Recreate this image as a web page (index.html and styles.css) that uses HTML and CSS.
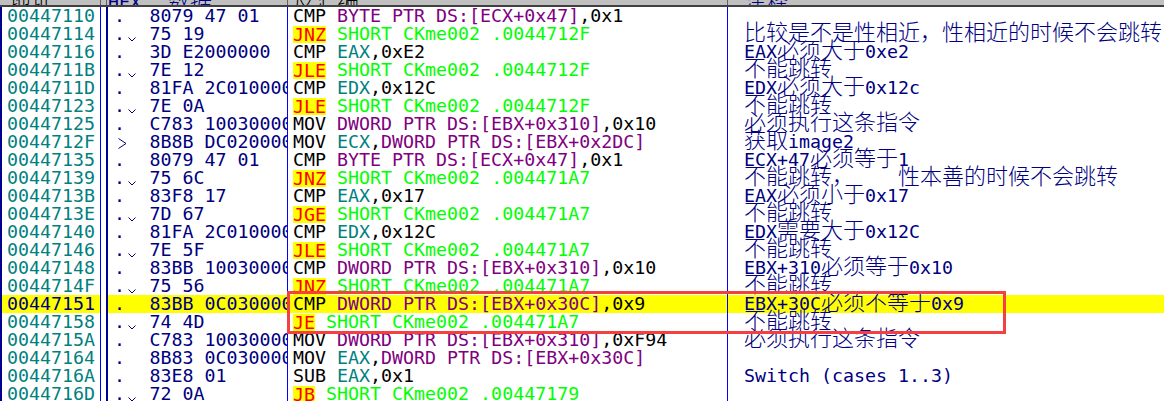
FILE: index.html
```html
<!DOCTYPE html>
<html lang="zh">
<head>
<meta charset="utf-8">
<title>CPU</title>
<link rel="stylesheet" href="styles.css">
</head>
<body>
<div class="pane">
  <div class="head">
    <div class="c-addr"><span class="hd">地址</span></div>
    <div class="c-hex"><span class="hd"><span class="lat">HEX</span> <span class="hz">数据</span></span></div>
    <div class="c-dis"><span class="hd">反汇编</span></div>
    <div class="c-com"><span class="hd">注释</span></div>
  </div>
  <div class="rows">
    <div class="row"><div class="c-addr">00447110</div><div class="c-hex"><span class="mk">.</span><span class="jm"></span><span class="by">8079 47 01</span></div><div class="c-dis">CMP <i class="m">BYTE PTR DS:[ECX+0x47]</i>,0x1</div><div class="c-com"></div></div>
    <div class="row"><div class="c-addr">00447114</div><div class="c-hex"><span class="mk">.</span><span class="jm"><svg class="ic" viewBox="0 0 8 5"><path d="M0.5 0.5L4 4L7.5 0.5"/></svg></span><span class="by">75 19</span></div><div class="c-dis"><b class="j">JNZ</b> <i class="s">SHORT CKme002 .0044712F</i></div><div class="c-com"><u>比较是不是性相近，性相近的时候不会跳转</u></div></div>
    <div class="row"><div class="c-addr">00447116</div><div class="c-hex"><span class="mk">.</span><span class="jm"></span><span class="by">3D E2000000</span></div><div class="c-dis">CMP <i class="r">EAX</i>,0xE2</div><div class="c-com">EAX<u>必须大于</u>0xe2</div></div>
    <div class="row"><div class="c-addr">0044711B</div><div class="c-hex"><span class="mk">.</span><span class="jm"><svg class="ic" viewBox="0 0 8 5"><path d="M0.5 0.5L4 4L7.5 0.5"/></svg></span><span class="by">7E 12</span></div><div class="c-dis"><b class="j">JLE</b> <i class="s">SHORT CKme002 .0044712F</i></div><div class="c-com"><u>不能跳转</u></div></div>
    <div class="row"><div class="c-addr">0044711D</div><div class="c-hex"><span class="mk">.</span><span class="jm"></span><span class="by">81FA 2C010000</span></div><div class="c-dis">CMP <i class="r">EDX</i>,0x12C</div><div class="c-com">EDX<u>必须大于</u>0x12c</div></div>
    <div class="row"><div class="c-addr">00447123</div><div class="c-hex"><span class="mk">.</span><span class="jm"><svg class="ic" viewBox="0 0 8 5"><path d="M0.5 0.5L4 4L7.5 0.5"/></svg></span><span class="by">7E 0A</span></div><div class="c-dis"><b class="j">JLE</b> <i class="s">SHORT CKme002 .0044712F</i></div><div class="c-com"><u>不能跳转</u></div></div>
    <div class="row"><div class="c-addr">00447125</div><div class="c-hex"><span class="mk">.</span><span class="jm"></span><span class="by">C783 10030000</span></div><div class="c-dis">MOV <i class="m">DWORD PTR DS:[EBX+0x310]</i>,0x10</div><div class="c-com"><u>必须执行这条指令</u></div></div>
    <div class="row"><div class="c-addr">0044712F</div><div class="c-hex"><span class="mk"><svg class="gt" viewBox="0 0 9 11"><path d="M0.5 0.5L8 5.5L0.5 10.5"/></svg></span><span class="jm"></span><span class="by">8B8B DC020000</span></div><div class="c-dis">MOV <i class="r">ECX</i>,<i class="m">DWORD PTR DS:[EBX+0x2DC]</i></div><div class="c-com"><u>获取</u>image2</div></div>
    <div class="row"><div class="c-addr">00447135</div><div class="c-hex"><span class="mk">.</span><span class="jm"></span><span class="by">8079 47 01</span></div><div class="c-dis">CMP <i class="m">BYTE PTR DS:[ECX+0x47]</i>,0x1</div><div class="c-com">ECX+47<u>必须等于</u>1</div></div>
    <div class="row"><div class="c-addr">00447139</div><div class="c-hex"><span class="mk">.</span><span class="jm"><svg class="ic" viewBox="0 0 8 5"><path d="M0.5 0.5L4 4L7.5 0.5"/></svg></span><span class="by">75 6C</span></div><div class="c-dis"><b class="j">JNZ</b> <i class="s">SHORT CKme002 .004471A7</i></div><div class="c-com"><u>不能跳转，</u>    <u>性本善的时候不会跳转</u></div></div>
    <div class="row"><div class="c-addr">0044713B</div><div class="c-hex"><span class="mk">.</span><span class="jm"></span><span class="by">83F8 17</span></div><div class="c-dis">CMP <i class="r">EAX</i>,0x17</div><div class="c-com">EAX<u>必须小于</u>0x17</div></div>
    <div class="row"><div class="c-addr">0044713E</div><div class="c-hex"><span class="mk">.</span><span class="jm"><svg class="ic" viewBox="0 0 8 5"><path d="M0.5 0.5L4 4L7.5 0.5"/></svg></span><span class="by">7D 67</span></div><div class="c-dis"><b class="j">JGE</b> <i class="s">SHORT CKme002 .004471A7</i></div><div class="c-com"><u>不能跳转</u></div></div>
    <div class="row"><div class="c-addr">00447140</div><div class="c-hex"><span class="mk">.</span><span class="jm"></span><span class="by">81FA 2C010000</span></div><div class="c-dis">CMP <i class="r">EDX</i>,0x12C</div><div class="c-com">EDX<u>需要大于</u>0x12C</div></div>
    <div class="row"><div class="c-addr">00447146</div><div class="c-hex"><span class="mk">.</span><span class="jm"><svg class="ic" viewBox="0 0 8 5"><path d="M0.5 0.5L4 4L7.5 0.5"/></svg></span><span class="by">7E 5F</span></div><div class="c-dis"><b class="j">JLE</b> <i class="s">SHORT CKme002 .004471A7</i></div><div class="c-com"><u>不能跳转</u></div></div>
    <div class="row"><div class="c-addr">00447148</div><div class="c-hex"><span class="mk">.</span><span class="jm"></span><span class="by">83BB 10030000</span></div><div class="c-dis">CMP <i class="m">DWORD PTR DS:[EBX+0x310]</i>,0x10</div><div class="c-com">EBX+310<u>必须等于</u>0x10</div></div>
    <div class="row"><div class="c-addr">0044714F</div><div class="c-hex"><span class="mk">.</span><span class="jm"><svg class="ic" viewBox="0 0 8 5"><path d="M0.5 0.5L4 4L7.5 0.5"/></svg></span><span class="by">75 56</span></div><div class="c-dis"><b class="j">JNZ</b> <i class="s">SHORT CKme002 .004471A7</i></div><div class="c-com"><u>不能跳转</u></div></div>
    <div class="row cur"><div class="c-addr">00447151</div><div class="c-hex"><span class="mk">.</span><span class="jm"></span><span class="by">83BB 0C030000</span></div><div class="c-dis">CMP <i class="m">DWORD PTR DS:[EBX+0x30C]</i>,0x9</div><div class="c-com">EBX+30C<u>必须不等于</u>0x9</div></div>
    <div class="row"><div class="c-addr">00447158</div><div class="c-hex"><span class="mk">.</span><span class="jm"><svg class="ic" viewBox="0 0 8 5"><path d="M0.5 0.5L4 4L7.5 0.5"/></svg></span><span class="by">74 4D</span></div><div class="c-dis"><b class="j">JE</b> <i class="s">SHORT CKme002 .004471A7</i></div><div class="c-com"><u>不能跳转</u></div></div>
    <div class="row"><div class="c-addr">0044715A</div><div class="c-hex"><span class="mk">.</span><span class="jm"></span><span class="by">C783 10030000</span></div><div class="c-dis">MOV <i class="m">DWORD PTR DS:[EBX+0x310]</i>,0xF94</div><div class="c-com"><u>必须执行这条指令</u></div></div>
    <div class="row"><div class="c-addr">00447164</div><div class="c-hex"><span class="mk">.</span><span class="jm"></span><span class="by">8B83 0C030000</span></div><div class="c-dis">MOV <i class="r">EAX</i>,<i class="m">DWORD PTR DS:[EBX+0x30C]</i></div><div class="c-com"></div></div>
    <div class="row"><div class="c-addr">0044716A</div><div class="c-hex"><span class="mk">.</span><span class="jm"></span><span class="by">83E8 01</span></div><div class="c-dis">SUB <i class="r">EAX</i>,0x1</div><div class="c-com">Switch (cases 1..3)</div></div>
    <div class="row"><div class="c-addr">0044716D</div><div class="c-hex"><span class="mk">.</span><span class="jm"><svg class="ic" viewBox="0 0 8 5"><path d="M0.5 0.5L4 4L7.5 0.5"/></svg></span><span class="by">72 0A</span></div><div class="c-dis"><b class="j">JB</b> <i class="s">SHORT CKme002 .00447179</i></div><div class="c-com"></div></div>
  </div>
  <div class="mark"></div>
</div>
</body>
</html>
```
FILE: styles.css
```css
html, body { margin: 0; padding: 0; background: #fff; }
body { width: 1164px; height: 401px; overflow: hidden; }
* { box-sizing: border-box; }
.pane {
  position: relative;
  display: flex;
  flex-direction: column;
  width: 1164px;
  height: 401px;
  overflow: hidden;
  font-family: "DejaVu Sans Mono", "Noto Sans CJK SC", monospace;
  font-size: 18.3px;
  line-height: 18px;
  color: #000;
}
.head {
  display: flex;
  flex: none;
  height: 7px;
  background: #c0c0c0;
  border-bottom: 2px solid #404040;
  color: #000;
}
.head > div {
  height: 5px;
  overflow: hidden;
  white-space: pre;
  background: none;
  border-left-color: transparent;
}
.hd {
  display: block;
  margin-top: -12px;
  font-family: "Noto Sans CJK SC", sans-serif;
  font-size: 22px;
  font-weight: 300;
  line-height: 22px;
}
.lat { font-family: "DejaVu Sans Mono", monospace; font-size: 18.3px; line-height: 0; }
.hz { margin-left: 22px; }
.head .c-addr { color: #000; border-right: 1px solid #606060; padding-left: 7px; }
.head .c-hex { border-left: 1px solid #606060; border-right: 1px solid #606060; padding-left: 1px; margin-left: 5px; display: block; }
.head .c-dis { border-right: 1px solid #606060; }
.rows { display: flex; flex-direction: column; flex: none; }
.row { display: flex; flex: none; height: 18px; }
.row > div { white-space: pre; }
.c-addr {
  flex: none;
  width: 101px;
  padding-left: 5px;
  color: #008080;
  border-left: 2px solid #000090;
  border-right: 1px solid #0000ff;
  overflow: hidden;
}
.c-hex {
  flex: none;
  display: flex;
  width: 182px;
  margin-left: 5px;
  color: #000080;
  border-left: 2px solid #000090;
  border-right: 1px solid #0000ff;
  overflow: hidden;
}
.c-dis {
  flex: none;
  width: 440px;
  padding-left: 5px;
  border-right: 1px solid #0000ff;
  overflow: hidden;
}
.c-com { flex: 1; min-width: 0; padding-left: 16px; color: #000080; }
.mk { flex: none; width: 11px; margin-left: 6px; }
.jm { flex: none; width: 24.5px; }
.ic {
  display: block;
  width: 8px;
  height: 5px;
  margin-top: 12px;
  margin-left: 3px;
  fill: none;
  stroke: #000080;
  stroke-width: 1;
}
.gt {
  display: block;
  width: 9px;
  height: 11px;
  margin-top: 5px;
  margin-left: 4px;
  fill: none;
  stroke: #000080;
  stroke-width: 1;
}
.by { flex: none; }
i, b { font-style: normal; font-weight: normal; }
.m { color: #800080; }
.r { color: #008080; }
.s { color: #00ff00; }
.j { display: inline-block; height: 17px; margin-top: 1px; line-height: 17px; color: #ff0000; background: #ffff00; vertical-align: top; }
u { text-decoration: none; font-family: "Noto Sans CJK SC", sans-serif; font-size: 22px; font-weight: 300; line-height: 0; }
.cur > div { background: #ffff00; }
.cur .c-addr { color: #000080; }
.mark {
  position: absolute;
  left: 287px;
  top: 291px;
  width: 719px;
  height: 43px;
  border: 3px solid #f44040;
}
```
